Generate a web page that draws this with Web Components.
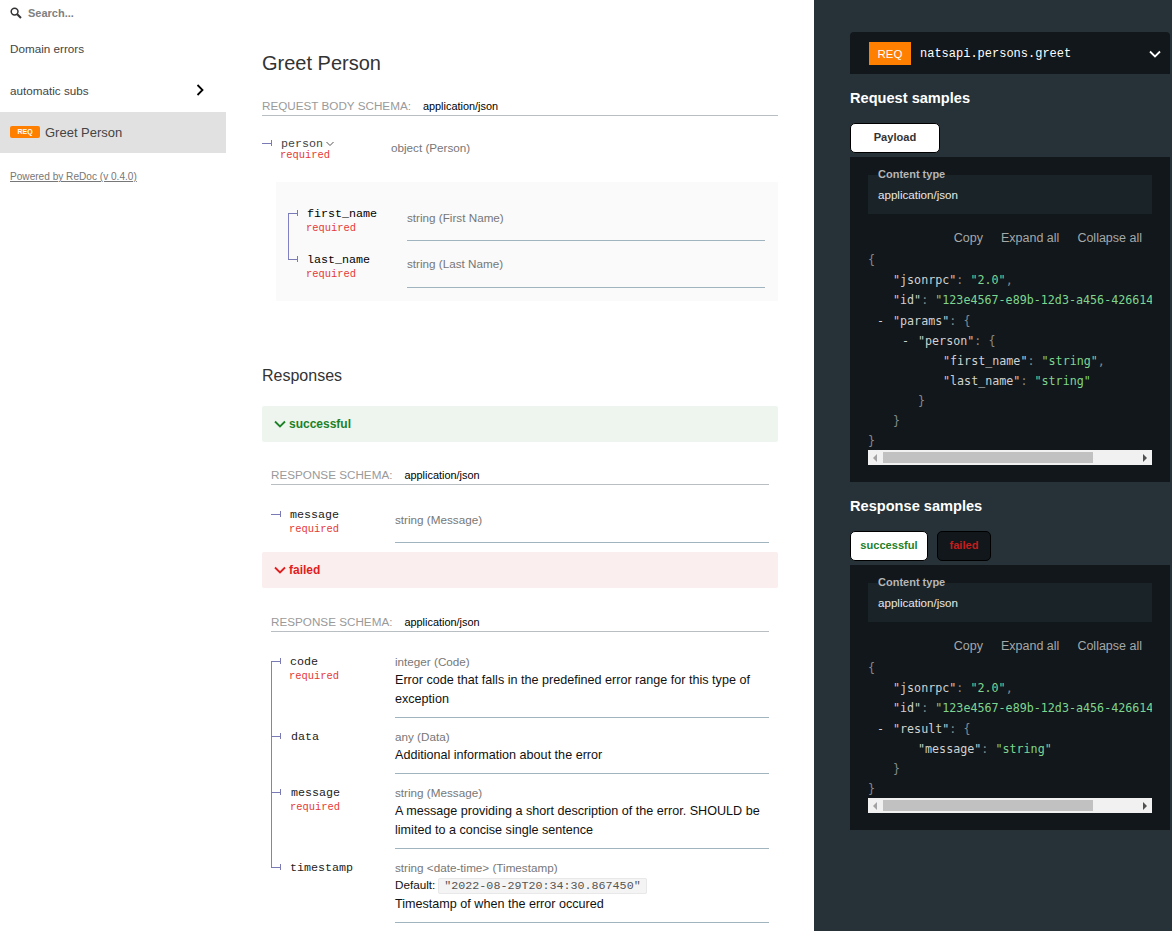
<!DOCTYPE html>
<html>
<head>
<meta charset="utf-8">
<title>Greet Person</title>
<style>
html, body { margin: 0; height: 100%; overflow: hidden; background: #fff; }
body { font-family: "Liberation Sans", Arial, sans-serif; display: flex; }
</style>
</head>
<body>
<api-sidebar></api-sidebar>
<api-main>
    <h-title>Greet Person</h-title>
    <schema-head label="REQUEST BODY SCHEMA:" top="0"></schema-head>
    <schema-row name="person" type="object (Person)" left="129" expandable plain color="#444" style="margin-top:14px"></schema-row>
    <nested-box>
        <schema-row name="first_name" type="string (First Name)" req left="119" tree="first" nametop="7" color="#000"></schema-row>
        <schema-row name="last_name" type="string (Last Name)" req left="119" tree="last" nametop="7" pb="15" color="#000" style="margin-top:5px"></schema-row>
    </nested-box>
    <h-sub>Responses</h-sub>
    <response-bar kind="ok">successful</response-bar>
    <response-body>
        <schema-head label="RESPONSE SCHEMA:" top="23"></schema-head>
        <schema-row name="message" type="string (Message)" req left="124" tree="solo" style="margin-top:17px"></schema-row>
    </response-body>
    <response-bar kind="bad" style="margin-top:9px">failed</response-bar>
    <response-body>
        <schema-head label="RESPONSE SCHEMA:" top="24"></schema-head>
        <schema-row name="code" type="integer (Code)" req left="124" tree="first" wide style="margin-top:11px">Error code that falls in the predefined error range for this type of exception</schema-row>
        <schema-row name="data" type="any (Data)" left="124" tree="mid" wide shift>Additional information about the error</schema-row>
        <schema-row name="message" type="string (Message)" req left="124" tree="mid" wide shift>A message providing a short description of the error. SHOULD be limited to a concise single sentence</schema-row>
        <schema-row name="timestamp" type="string &lt;date-time&gt; (Timestamp)" left="124" tree="last" wide default="&quot;2022-08-29T20:34:30.867450&quot;">Timestamp of when the error occured</schema-row>
    </response-body>
</api-main>
<api-samples></api-samples>

<script>
const CHEVRON = (color, w) => `<svg width="${w}" height="${w}" viewBox="0 0 12 12" fill="none" stroke="${color}" stroke-width="1.8"><path d="M1 3.5 L6 8.5 L11 3.5"/></svg>`;

class ApiSidebar extends HTMLElement
{
    constructor()
    {
        super();
        this.attachShadow({ mode: "open" }).innerHTML = `
        <style>
        :host { display: block; width: 226px; flex: none; font-size: 11.7px; color: #444; }
        .search { height: 27px; display: flex; align-items: center; padding: 0 0 1px 10px; box-sizing: border-box; gap: 6px; }
        .search span { font-size: 11px; font-weight: 700; color: #808080; }
        .item { height: 42px; display: flex; align-items: center; padding: 0 22px 0 10px; justify-content: space-between; box-sizing: border-box; }
        .active { height: 41px; margin-top: 1px; padding-bottom: 1px; background: #e1e1e1; font-size: 13px; justify-content: flex-start; gap: 5px; }
        .badge { width: 30px; height: 12px; background: #ff7f00; border-radius: 2px; color: #fff; font-size: 7px; font-weight: 700; display: flex; align-items: center; justify-content: center; margin-top: -1px; }
        a { display: block; margin: 18px 0 0 10px; font-size: 10.1px; color: #777; text-decoration: underline; }
        </style>
        <div class="search">
            <svg width="12" height="12" viewBox="0 0 12 12" fill="none" stroke="#333"><circle cx="4.6" cy="4.6" r="3.4" stroke-width="1.5"/><path d="M7.2 7.2 L11 11" stroke-width="2"/></svg>
            <span>Search...</span>
        </div>
        <div class="item">Domain errors</div>
        <div class="item">automatic subs
            <svg width="8" height="12" viewBox="0 0 8 12" fill="none" stroke="#000" stroke-width="1.8"><path d="M1.5 1 L6.5 6 L1.5 11"/></svg>
        </div>
        <div class="item active"><span class="badge">REQ</span>Greet Person</div>
        <a>Powered by ReDoc (v 0.4.0)</a>`;
    }
}

class ApiMain extends HTMLElement
{
    constructor()
    {
        super();
        this.attachShadow({ mode: "open" }).innerHTML = `
        <style>
        :host { display: block; width: 588px; flex: none; box-sizing: border-box; padding: 0 36px; }
        </style>
        <slot></slot>`;
    }
}

class HTitle extends HTMLElement
{
    constructor()
    {
        super();
        this.attachShadow({ mode: "open" }).innerHTML = `
        <style>
        :host { display: block; padding-top: 50px; height: 46px; font-size: 20px; line-height: 26px; color: #333; }
        </style>
        <slot></slot>`;
    }
}

class HSub extends HTMLElement
{
    constructor()
    {
        super();
        this.attachShadow({ mode: "open" }).innerHTML = `
        <style>
        :host { display: block; margin-top: 63px; height: 42px; font-size: 16px; line-height: 24px; color: #333; }
        </style>
        <slot></slot>`;
    }
}

class SchemaHead extends HTMLElement
{
    constructor()
    {
        super();
        const label = this.getAttribute("label");
        this.attachShadow({ mode: "open" }).innerHTML = `
        <style>
        :host { display: flex; align-items: center; margin-top: ${this.getAttribute("top")}px; height: 19px; border-bottom: 1px solid #b9bec2; box-sizing: content-box; }
        .l { font-size: 11.7px; color: #9a9a9a; margin-right: 12px; }
        .v { font-size: 10.9px; color: #000; }
        </style>
        <span class="l">${label}</span><span class="v">application/json</span>`;
    }
}

class SchemaRow extends HTMLElement
{
    constructor()
    {
        super();
        const name = this.getAttribute("name");
        const type = this.getAttribute("type").replace("<", "&lt;");
        const left = this.getAttribute("left");
        const req = this.hasAttribute("req") || this.hasAttribute("expandable");
        const wide = this.hasAttribute("wide");
        const plain = this.hasAttribute("plain");
        const shift = this.hasAttribute("shift") ? 1 : 0;
        const tree = this.getAttribute("tree") || "solo";
        const def = this.getAttribute("default");
        const color = this.getAttribute("color") || "#222";
        const pb = this.getAttribute("pb") || 14;
        const nameTop = this.hasAttribute("nametop") ? +this.getAttribute("nametop") : (wide ? 12 : (plain ? 7 : 6));

        this.attachShadow({ mode: "open" }).innerHTML = `
        <style>
        :host { display: flex; position: relative; }
        .name { flex: none; width: ${left}px; box-sizing: border-box; padding: ${nameTop}px 0 0 ${19 + shift}px; position: relative; }
        .n { font: 11.7px/14px "Liberation Mono", "Courier New", monospace; color: ${color}; display: flex; align-items: center; gap: 3px; }
        .r { font: 10.4px/14px "Liberation Mono", "Courier New", monospace; color: #e53935; margin-left: -1px; ${plain ? "margin-top:-3px;" : ""} }
        .tick { position: absolute; left: 0; top: ${nameTop + 5}px; width: 9px; height: 6px; border-right: 1px solid #7a7ab4; box-sizing: content-box; margin-top: -2px; }
        .tick::before { content: ""; position: absolute; left: 0; right: 0; top: 3px; height: 1px; background: #7a7ab4; }
        .line { position: absolute; left: 0; width: 1px; background: #8080c4; }
        .first { top: ${nameTop + 6}px; bottom: 0; }
        .mid { top: 0; bottom: 0; }
        .last { top: -5px; height: ${nameTop + 12}px; }
        .solo { display: none; }
        .info { flex: 1; min-width: 0; padding: ${wide ? 11 : 10}px 0 ${wide ? 8 : pb}px; ${plain ? "" : "border-bottom: 1px solid #9fb4be;"} }
        .t { font-size: 11.7px; line-height: 16px; color: #777; }
        .d { font-size: 12.6px; line-height: 19px; color: #111; ${wide && !def ? "margin-top: 1px;" : ""} }
        .def { font-size: 11.7px; line-height: 17px; margin-bottom: 2px; color: #111; }
        code { font: 11.7px "Liberation Mono", monospace; color: #555; background: #f4f4f4; border: 1px solid #e8e8e8; border-radius: 2px; padding: 0 5px; margin-left: 3px; }
        </style>
        <div class="name">
            <i class="line ${tree}"></i><i class="tick"></i>
            <div class="n">${name}${this.hasAttribute("expandable") ? `<svg width="8" height="6" viewBox="0 0 8 6" fill="none" stroke="#555"><path d="M.5 1 L4 4.5 L7.500 1"/></svg>` : ""}</div>
            ${req ? `<div class="r">required</div>` : ""}
        </div>
        <div class="info">
            <div class="t">${type}</div>
            ${def ? `<div class="def">Default:<code>${def}</code></div>` : ""}
            <div class="d"><slot></slot></div>
        </div>`;
    }
}

class NestedBox extends HTMLElement
{
    constructor()
    {
        super();
        this.attachShadow({ mode: "open" }).innerHTML = `
        <style>
        :host { display: block; margin: 12px 0 0 14px; padding: 18px 13px 13px 12px; background: #fafafa; }
        </style>
        <slot></slot>`;
    }
}

class ResponseBar extends HTMLElement
{
    constructor()
    {
        super();
        const ok = this.getAttribute("kind") == "ok";
        const color = ok ? "#1d8127" : "#e01e1e";
        this.attachShadow({ mode: "open" }).innerHTML = `
        <style>
        :host { display: flex; align-items: center; height: 36px; padding-left: 12px; gap: 3px; background: ${ok ? "#eef5ef" : "#fbeeee"}; border-radius: 2px; color: ${color}; font-size: 12px; font-weight: 700; }
        </style>
        ${CHEVRON(color, 12)}<slot></slot>`;
    }
}

class ResponseBody extends HTMLElement
{
    constructor()
    {
        super();
        this.attachShadow({ mode: "open" }).innerHTML = `
        <style>
        :host { display: block; margin: 0 9px; }
        </style>
        <slot></slot>`;
    }
}

class JsonView extends HTMLElement
{
    constructor()
    {
        super();
        const lines = JSON.parse(this.getAttribute("lines"));
        const html = lines.map(([level, text, dash]) =>
            `<div class="l" style="padding-left:${level * 25}px;${dash === 2 ? "margin-top:1px" : ""}">${dash ? `<span class="d">-</span>` : ""}${text}</div>`
        ).join("");
        this.attachShadow({ mode: "open" }).innerHTML = `
        <style>
        :host { display: block; font: 11.7px/20px "DejaVu Sans Mono", monospace; color: #cfd1d2; overflow: hidden; white-space: nowrap; }
        .l { height: 20px; }
        .d { display: inline-block; width: 16px; margin-left: -16px; }
        .p { color: #858a8c; }
        .s { color: #7fd58f; }
        </style>
        ${html}`;
    }
}

class FakeScroll extends HTMLElement
{
    constructor()
    {
        super();
        this.attachShadow({ mode: "open" }).innerHTML = `
        <style>
        :host { display: flex; align-items: center; height: 15px; background: #f1f1f1; margin-top: -1px; }
        i { width: 0; height: 0; border-style: solid; border-width: 4px 0 4px 4px; border-color: transparent transparent transparent #505050; }
        i.a { border-width: 4px 4px 4px 0; border-color: transparent #a3a3a3 transparent transparent; margin: 0 6px 0 5px; }
        b { width: 210px; height: 11px; background: #c1c1c1; margin-right: 50px; }
        </style>
        <i class="a"></i><b></b><i></i>`;
    }
}

class SamplePanel extends HTMLElement
{
    constructor()
    {
        super();
        this.attachShadow({ mode: "open" }).innerHTML = `
        <style>
        :host { display: block; margin-top: 4px; padding: 18px 18px 17px; background: #11171a; }
        .ct { height: 39px; background: #1a2327; padding: 0 10px; box-sizing: border-box; color: #e8e8e8; font-size: 11.6px; }
        .ct b { display: block; font-size: 11px; line-height: 13px; margin-top: -7px; color: #b4b6b7; position: relative; top: -1px; }
        .ct span { display: block; line-height: 14px; margin-top: 6px; }
        .ct div { height: 1px; }
        .tools { display: flex; justify-content: flex-end; gap: 18px; height: 36px; align-items: center; padding: 12px 10px 0 0; box-sizing: border-box; font-size: 12.5px; color: #a5a8a9; }
        </style>
        <div class="ct"><div></div><b>Content type</b><span>application/json</span></div>
        <div class="tools"><span>Copy</span><span>Expand all</span><span>Collapse all</span></div>
        <slot></slot>`;
    }
}

class SampleTab extends HTMLElement
{
    constructor()
    {
        super();
        const dark = this.hasAttribute("dark");
        this.attachShadow({ mode: "open" }).innerHTML = `
        <style>
        :host { display: flex; align-items: center; justify-content: center; box-sizing: border-box; height: 30px; padding-bottom: 2px; width: ${this.getAttribute("w")}px; border: 1px solid #000; border-radius: 5px; background: ${dark ? "#11171a" : "#fff"}; color: ${this.getAttribute("color") || "#333"}; font-size: 11.1px; font-weight: 700; }
        </style>
        <slot></slot>`;
    }
}

class ApiSamples extends HTMLElement
{
    constructor()
    {
        super();
        const k = (t) => `"${t}"<span class="p">:</span> `;
        const s = (t) => `<span class="s">"${t}"</span>`;
        const p = (t) => `<span class="p">${t}</span>`;
        const req = [
            [0, p("{")],
            [1, k("jsonrpc") + s("2.0") + p(",")],
            [1, k("id") + s("123e4567-e89b-12d3-a456-426614174000") + p(",")],
            [1, k("params") + p("{"), 2],
            [2, k("person") + p("{"), 1],
            [3, k("first_name") + s("string") + p(",")],
            [3, k("last_name") + s("string")],
            [2, p("}")],
            [1, p("}")],
            [0, p("}")]
        ];
        const res = [
            [0, p("{")],
            [1, k("jsonrpc") + s("2.0") + p(",")],
            [1, k("id") + s("123e4567-e89b-12d3-a456-426614174000") + p(",")],
            [1, k("result") + p("{"), 2],
            [2, k("message") + s("string")],
            [1, p("}")],
            [0, p("}")]
        ];
        const attr = (a) => JSON.stringify(a).replace(/&/g, "&amp;").replace(/'/g, "&#39;");

        this.attachShadow({ mode: "open" }).innerHTML = `
        <style>
        :host { display: block; flex: 1; min-width: 0; background: #263238; padding: 32px 2px 0 36px; box-sizing: border-box; }
        .head { height: 42px; background: #11171a; border-radius: 4px 4px 0 0; display: flex; align-items: center; padding: 0 9px 0 19px; color: #fff; }
        .badge { width: 42px; height: 23px; margin: 1px 9px 0 0; background: #ff7f00; font-size: 11.5px; display: flex; align-items: center; justify-content: center; }
        .path { flex: 1; font: 12px "Liberation Mono", monospace; margin-top: 2px; }
        .head svg { margin-top: 1px; }
        h3 { margin: 0; font-size: 14.6px; font-weight: 700; color: #fff; line-height: 18px; }
        .h1 { margin-top: 15px; }
        .h2 { margin-top: 15px; }
        .tabs { display: flex; gap: 9px; margin-top: 16px; }
        </style>
        <div class="head"><span class="badge">REQ</span><span class="path">natsapi.persons.greet</span>${CHEVRON("#fff", 12)}</div>
        <h3 class="h1">Request samples</h3>
        <div class="tabs"><sample-tab w="90">Payload</sample-tab></div>
        <sample-panel>
            <json-view lines='${attr(req)}'></json-view>
            <fake-scroll></fake-scroll>
        </sample-panel>
        <h3 class="h2">Response samples</h3>
        <div class="tabs"><sample-tab w="78" color="#1d8127">successful</sample-tab><sample-tab w="54" dark color="#c41e1e">failed</sample-tab></div>
        <sample-panel>
            <json-view lines='${attr(res)}'></json-view>
            <fake-scroll></fake-scroll>
        </sample-panel>`;
    }
}

customElements.define("sample-tab", SampleTab);
customElements.define("json-view", JsonView);
customElements.define("fake-scroll", FakeScroll);
customElements.define("sample-panel", SamplePanel);
customElements.define("api-sidebar", ApiSidebar);
customElements.define("api-main", ApiMain);
customElements.define("h-title", HTitle);
customElements.define("h-sub", HSub);
customElements.define("schema-head", SchemaHead);
customElements.define("schema-row", SchemaRow);
customElements.define("nested-box", NestedBox);
customElements.define("response-bar", ResponseBar);
customElements.define("response-body", ResponseBody);
customElements.define("api-samples", ApiSamples);
</script>
</body>
</html>
